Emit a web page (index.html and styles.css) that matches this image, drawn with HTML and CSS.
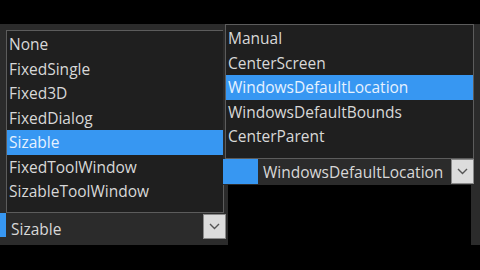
FILE: index.html
```html
<!DOCTYPE html>
<html lang="en">
<head>
  <meta charset="UTF-8" />
  <title>Form property dropdowns</title>
  <link rel="stylesheet" href="styles.css">
</head>
<body>
  <div class="desk">
    <div class="win win-left">
      <ul class="list">
        <li>None</li>
        <li>FixedSingle</li>
        <li>Fixed3D</li>
        <li>FixedDialog</li>
        <li class="sel">Sizable</li>
        <li>FixedToolWindow</li>
        <li>SizableToolWindow</li>
      </ul>
      <div class="combo">
        <span class="swatch swatch-cut"></span>
        <span class="value">Sizable</span>
        <span class="drop"><svg width="11" height="7" viewBox="0 0 11 7"><path d="M1 1l4.5 4.5L10 1" fill="none" stroke="#555" stroke-width="1.4"/></svg></span>
      </div>
    </div>

    <div class="win win-right">
      <ul class="list">
        <li>Manual</li>
        <li>CenterScreen</li>
        <li class="sel">WindowsDefaultLocation</li>
        <li>WindowsDefaultBounds</li>
        <li>CenterParent</li>
      </ul>
      <div class="combo">
        <span class="swatch"></span>
        <span class="value">WindowsDefaultLocation</span>
        <span class="drop"><svg width="11" height="7" viewBox="0 0 11 7"><path d="M1 1l4.5 4.5L10 1" fill="none" stroke="#555" stroke-width="1.4"/></svg></span>
      </div>
      <div class="tail"></div>
    </div>
  </div>
</body>
</html>
```

FILE: styles.css
```css
:root {
  --panel: #2b2b2b;
  --list: #1f1f1f;
  --edge: #5c5c5c;
  --text: #d8d8d8;
  --hl: #3797f2;
}

body {
  margin: 0;
  background: #000;
  font-family: "Open Sans", "Noto Sans", sans-serif;
  font-size: 15.5px;
  color: var(--text);
}

.desk {
  position: relative;
  width: 480px;
  height: 270px;
  overflow: hidden;
}

.win {
  position: absolute;
  top: 24px;
  background: var(--panel);
  display: flex;
  flex-direction: column;
}

.win-left {
  left: 0;
  width: 228px;
  height: 221px;
  padding: 6px 4px 0 6px;
  box-sizing: border-box;
}

.win-right {
  left: 223px;
  width: 257px;
  height: 161px;
  padding: 0 6px 0 2px;
  box-sizing: border-box;
}

.list {
  list-style: none;
  margin: 0;
  background: var(--list);
  border: 1px solid var(--edge);
}

.win-left .list {
  padding: 1px 0 8px;
}

.win-right .list {
  padding: 1px 0 9px;
}

.list li {
  height: 24.5px;
  line-height: 24px;
  padding-left: 2px;
  white-space: nowrap;
}

.list li.sel {
  background: var(--hl);
  color: #e6f2ff;
}

.combo {
  display: flex;
  align-items: center;
  height: 32px;
  gap: 5px;
}

.win-left .combo {
  margin-left: -6px;
  margin-right: -2px;
}

.win-right .combo {
  height: 27px;
  margin-left: -2px;
  margin-right: -4px;
  padding-right: 4px;
}

.swatch {
  width: 35px;
  height: 25px;
  background: var(--hl);
  flex: none;
}

.swatch-cut {
  width: 6px;
  height: 24px;
  margin-top: -7px;
}

.value {
  flex: 1;
  white-space: nowrap;
}

.drop {
  width: 21px;
  height: 23px;
  background: #dcdcdc;
  border: 1px solid #8a8a8a;
  display: flex;
  align-items: center;
  justify-content: center;
  flex: none;
}

.win-left .drop {
  margin-top: -4px;
}

.tail {
  position: absolute;
  right: 0;
  top: 161px;
  width: 9px;
  height: 60px;
  background: var(--panel);
}
```
